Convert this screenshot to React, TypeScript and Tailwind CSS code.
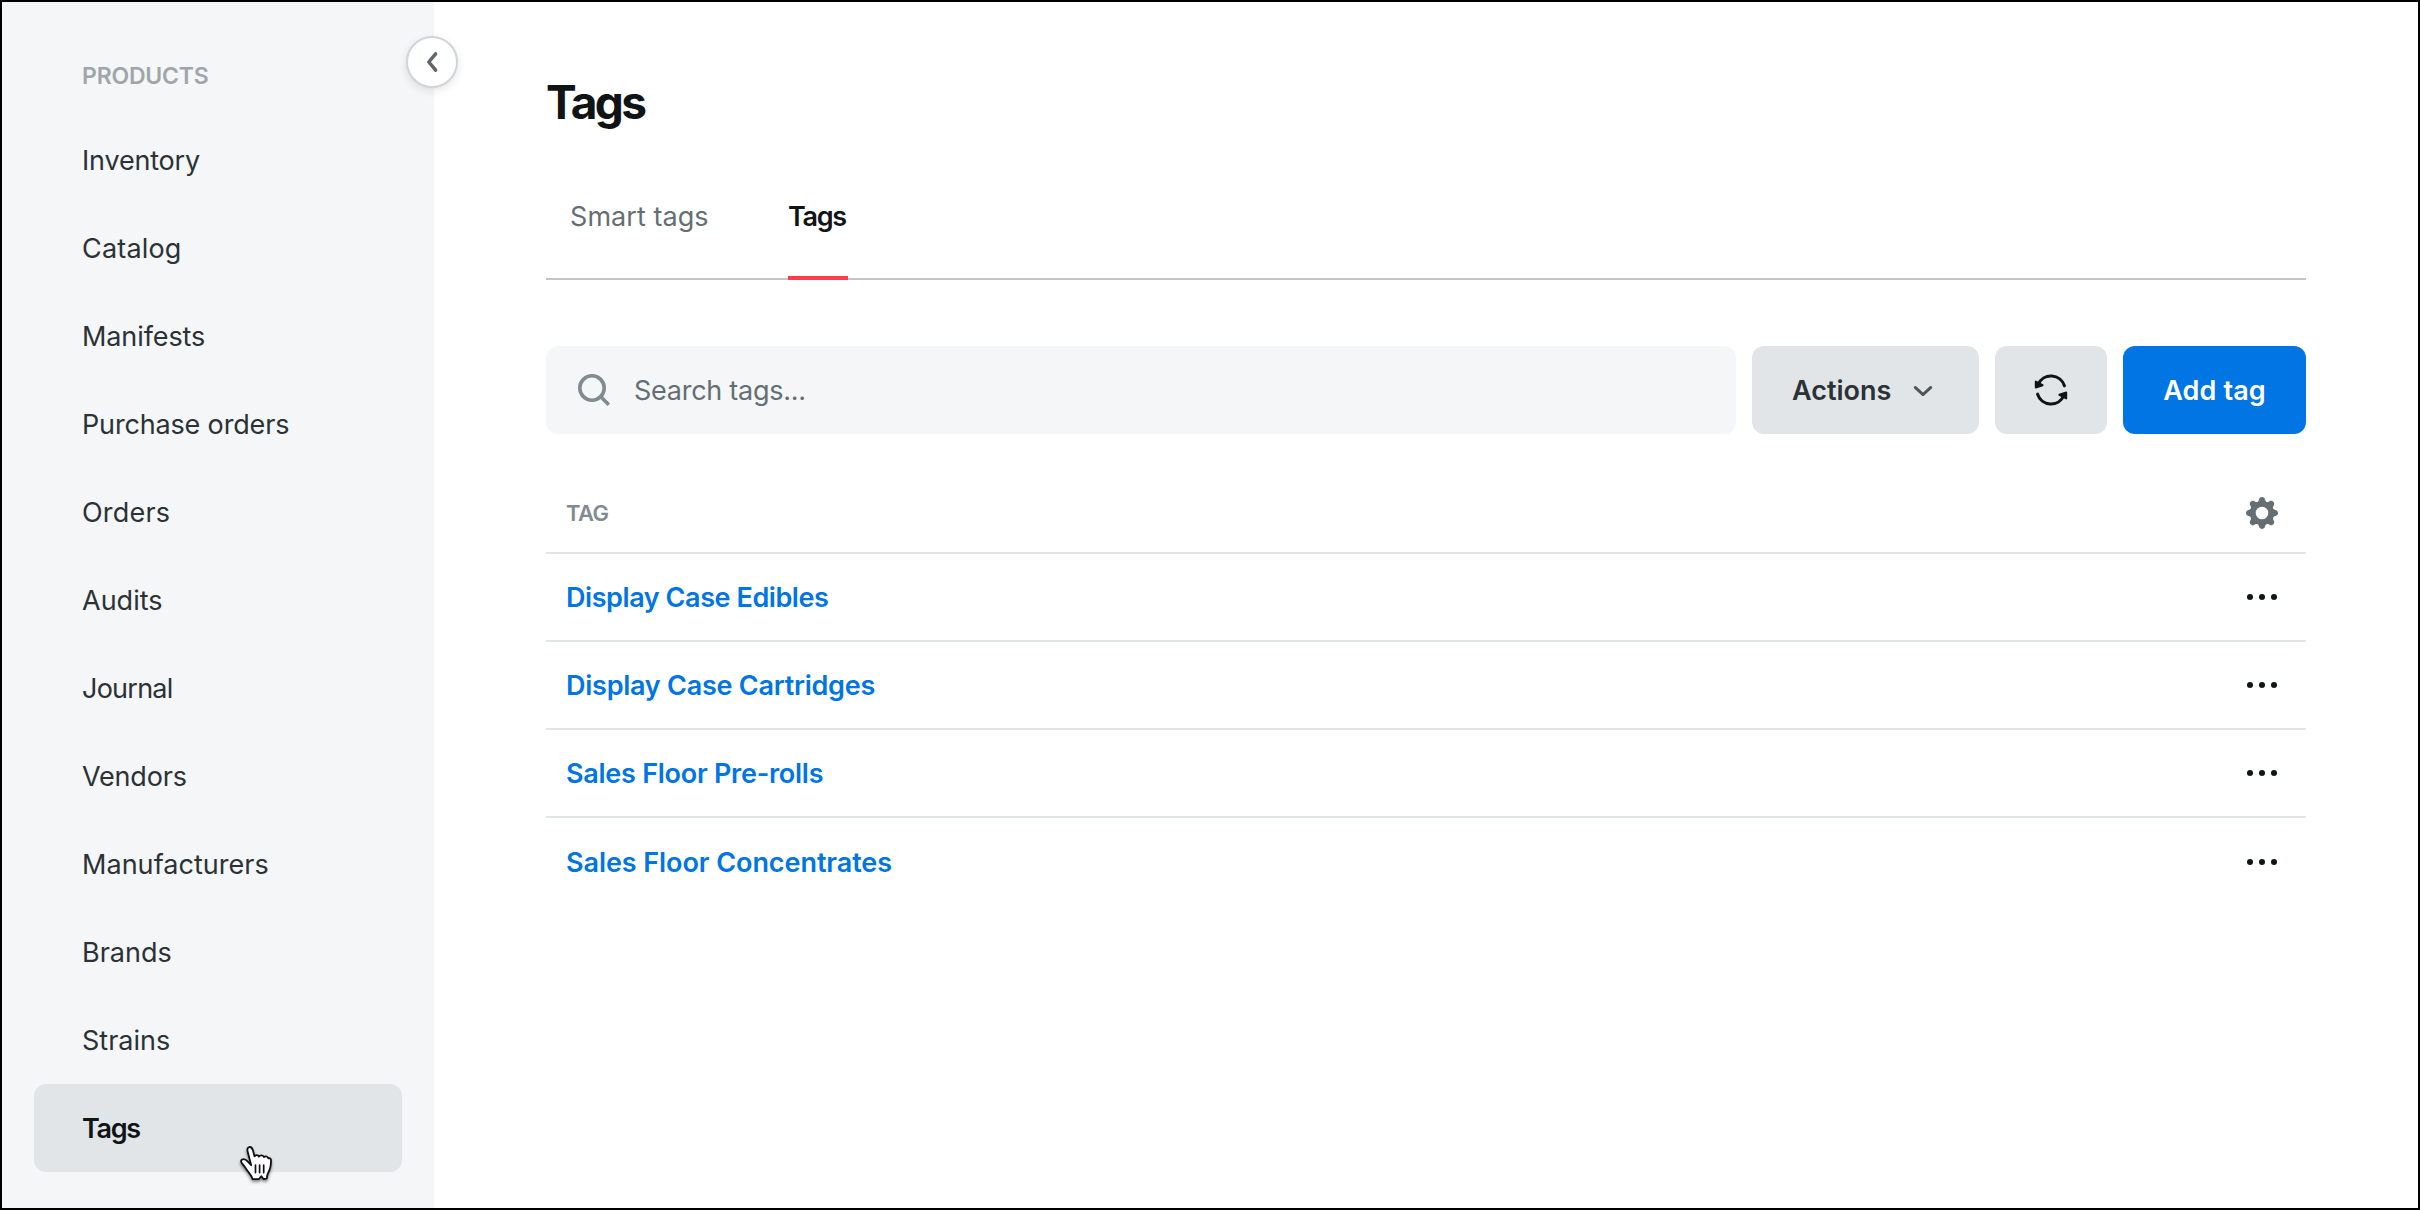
import clsx from 'clsx';

interface NavItem {
  label: string;
  className?: string;
}

const navItems: NavItem[] = [
  { label: 'Inventory', className: 'tracking-[-0.19px]' },
  { label: 'Catalog', className: 'tracking-[0.18px]' },
  { label: 'Manifests', className: 'tracking-[-0.1px]' },
  { label: 'Purchase orders', className: 'tracking-[-0.16px]' },
  { label: 'Orders', className: 'tracking-[0.2px]' },
  { label: 'Audits' },
  { label: 'Journal', className: 'tracking-[-0.75px]' },
  { label: 'Vendors', className: 'tracking-[-0.2px]' },
  { label: 'Manufacturers', className: 'tracking-[0.04px]' },
  { label: 'Brands' },
  { label: 'Strains' },
  { label: 'Tags', className: 'tracking-[-1.3px]' },
];

const tags = [
  { name: 'Display Case Edibles', className: 'tracking-[-0.43px]' },
  { name: 'Display Case Cartridges', className: 'tracking-[-0.25px]' },
  { name: 'Sales Floor Pre-rolls', className: 'tracking-[-0.26px]' },
  { name: 'Sales Floor Concentrates', className: 'tracking-[-0.07px]' },
];

function SearchIcon() {
  return (
    <svg className="w-8 h-8 shrink-0" viewBox="0 0 32 32" fill="none" stroke="#828b90" strokeWidth="3.6">
      <circle cx="14" cy="14" r="12.2" />
      <path d="M22.6 22.6l8.2 8.2" />
    </svg>
  );
}

function RefreshIcon() {
  return (
    <svg className="w-9 h-9" viewBox="-18 -18 36 36">
      {[0, 180].map((angle) => (
        <g key={angle} transform={`rotate(${angle})`}>
          <path d="M-12.8 -5.6A14 14 0 0 1 13.4 -4.2" fill="none" stroke="#101415" strokeWidth="3.1" strokeLinecap="round" />
          <path d="M-15.2 -8.4V-2.4L-8.4 -4.8Z" fill="#101415" stroke="#101415" strokeWidth="2" strokeLinejoin="round" />
        </g>
      ))}
    </svg>
  );
}

function GearIcon() {
  return (
    <svg className="w-8 h-8" viewBox="-16 -16 32 32">
      <circle r="9.2" fill="none" stroke="#646e73" strokeWidth="5.8" />
      {[0, 45, 90, 135, 180, 225, 270, 315].map((angle) => (
        <path
          key={angle}
          transform={`rotate(${angle})`}
          d="M-5 -10.6C-3.6 -11.4 -3.4 -12.2 -3 -13.6C-2.3 -16.8 2.3 -16.8 3 -13.6C3.4 -12.2 3.6 -11.4 5 -10.6Z"
          fill="#646e73"
        />
      ))}
    </svg>
  );
}

function MoreIcon() {
  return (
    <svg className="w-8 h-8" viewBox="0 0 32 32" fill="#101415">
      <circle cx="4" cy="16" r="3" />
      <circle cx="16" cy="16" r="3" />
      <circle cx="28" cy="16" r="3" />
    </svg>
  );
}

function HandCursor() {
  return (
    <svg
      className="absolute left-[205px] top-[61px] w-9 h-10 drop-shadow-[0_2px_1.5px_rgba(0,0,0,0.45)]"
      viewBox="-1 -1 36 40"
      strokeLinecap="round"
      strokeLinejoin="round"
    >
      <path
        d="M11.2 19.2L7.6 5.4C7 3 7.6 1.5 9.2 1.1C11 .7 12.2 1.9 12.9 4.2L14.6 10.4C15.4 8.8 18.2 8.8 18.9 10.6C20 8.8 23.2 9 24 11C25.4 9.8 28 10.4 28.3 12.4C30 11.6 31 12.8 31 14.6C31 20 30.6 22.4 28.6 26C27.2 28.4 26.8 30 26.8 32.6L23.4 33L21.4 30.2L19 33L12.6 33.2C12.2 30.6 10.2 28.4 8.4 26C6 22.8 4.4 20 2.4 17.8C.8 16 .6 14.4 2 13.6C3.8 12.6 6 13.6 7.6 15.4Z"
        fill="#fff"
        stroke="#101010"
        strokeWidth="1.8"
      />
      <path d="M15.5 19v7.6M19.6 19v7.6M23.7 19v7.6" stroke="#101010" strokeWidth="1.7" fill="none" />
    </svg>
  );
}

function Sidebar() {
  return (
    <aside className="relative w-[432px] shrink-0 bg-[#f4f6f8] px-8">
      <div className="pl-12 pt-[58px] h-[114px] text-[23px] leading-8 font-semibold tracking-[-0.2px] text-[#9fa6ab]">
        PRODUCTS
      </div>
      <nav>
        {navItems.map((item) => {
          const active = item.label === 'Tags';
          return (
            <a
              key={item.label}
              className={clsx(
                'relative flex items-center h-[88px] pl-12 pt-0.5 rounded-xl',
                active ? 'bg-[#e1e5e8] font-semibold text-[#101415]' : 'text-[#2b3236]',
                item.className,
              )}
            >
              {item.label}
              {active && <HandCursor />}
            </a>
          );
        })}
      </nav>

      <button className="absolute left-[404px] top-[34px] w-[52px] h-[52px] flex items-center justify-center rounded-full border-2 border-[#d0d5d9] bg-white shadow-[0_3px_8px_rgba(0,0,0,0.1)]">
        <svg className="w-6 h-6" viewBox="0 0 24 24" fill="none" stroke="#5c666b" strokeWidth="3.5" strokeLinecap="round" strokeLinejoin="round">
          <path d="M15.6 3.8L8.8 12L15.6 20.2" />
        </svg>
      </button>
    </aside>
  );
}

export default function App() {
  return (
    <div className="flex w-[2420px] h-[1210px] overflow-hidden border-2 border-black bg-white font-['Inter',sans-serif] text-[27px] leading-10">
      <Sidebar />

      <main className="flex-1 px-28 pt-[70px]">
        <div className="w-[1760px]">
          <h1 className="h-[60px] text-[46px] leading-[61px] font-bold tracking-[-2.6px] text-[#101415]">Tags</h1>

          {/* Tabs */}
          <div className="mt-[46px] h-[102px] flex border-b-2 border-[#bfc5c9] pl-6">
            <div className="w-[218px] pt-[19px] tracking-[0.06px] text-[#646e73]">Smart tags</div>
            <div className="w-[60px] h-[102px] pt-[19px] border-b-4 border-[#ff3b4e] font-semibold tracking-[-1.3px] text-[#101415]">
              Tags
            </div>
          </div>

          {/* Toolbar */}
          <div className="mt-[66px] flex gap-4 h-[88px] font-semibold">
            <div className="flex-1 flex items-center gap-6 pl-8 rounded-xl bg-[#f4f6f8] font-normal tracking-[-0.26px] text-[#646e73]">
              <SearchIcon />
              <span className="pt-0.5">Search tags...</span>
            </div>
            <button className="w-[227px] flex items-center pl-10 gap-5 rounded-xl bg-[#e1e5e8] text-[#2b3236]">
              <span className="pt-0.5">Actions</span>
              <svg className="w-6 h-6" viewBox="0 0 24 24" fill="none" stroke="#4a5459" strokeWidth="2.8" strokeLinecap="round" strokeLinejoin="round">
                <path d="M4.2 9.4l7.8 7.2L19.8 9.4" />
              </svg>
            </button>
            <button className="w-[112px] flex items-center justify-center rounded-xl bg-[#e1e5e8]">
              <RefreshIcon />
            </button>
            <button className="w-[183px] pt-0.5 rounded-xl bg-[#0075e3] text-center tracking-[0.1px] text-white">Add tag</button>
          </div>

          {/* Table */}
          <div className="mt-10">
            <div className="h-20 flex items-center justify-between pl-5 pr-7 border-b-2 border-[#e1e5e8] text-[22px] font-semibold tracking-[-0.6px] text-[#828b90]">
              TAG
              <GearIcon />
            </div>
            {tags.map((tag) => (
              <div
                key={tag.name}
                className="h-[88px] flex items-center justify-between pl-5 pr-7 border-b-2 border-[#e1e5e8] last:border-b-0"
              >
                <a className={clsx('pt-0.5 font-semibold text-[#0075e3]', tag.className)}>{tag.name}</a>
                <MoreIcon />
              </div>
            ))}
          </div>
        </div>
      </main>
    </div>
  );
}
